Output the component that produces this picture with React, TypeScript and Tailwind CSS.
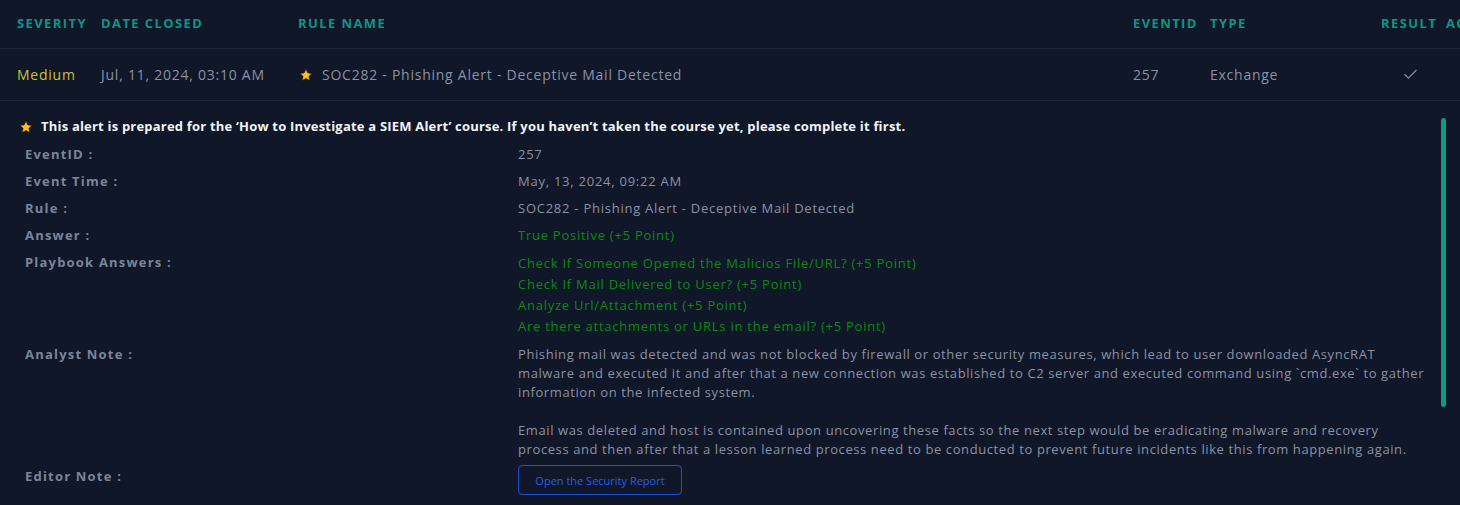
import { Check } from "lucide-react";

const cols = [
  { label: "SEVERITY", w: "w-[84px]" },
  { label: "DATE CLOSED", w: "w-[197px]" },
  { label: "RULE NAME", w: "w-[835px]" },
  { label: "EVENTID", w: "w-[77px]" },
  { label: "TYPE", w: "w-[171px]" },
  { label: "RESULT", w: "w-[65px]" },
  { label: "ACTION", w: "w-[80px]" },
];

const playbook = [
  "Check If Someone Opened the Malicios File/URL? (+5 Point)",
  "Check If Mail Delivered to User? (+5 Point)",
  "Analyze Url/Attachment (+5 Point)",
  "Are there attachments or URLs in the email? (+5 Point)",
];

const noteLines = [
  "Phishing mail was detected and was not blocked by firewall or other security measures, which lead to user downloaded AsyncRAT",
  "malware and executed it and after that a new connection was established to C2 server and executed command using `cmd.exe` to gather",
  "information on the infected system.",
  "",
  "Email was deleted and host is contained upon uncovering these facts so the next step would be eradicating malware and recovery",
  "process and then after that a lesson learned process need to be conducted to prevent future incidents like this from happening again.",
];

const Star = ({ size = 13 }: { size?: number }) => (
  <svg width={size} height={size} viewBox="0 0 24 24" className="shrink-0">
    <path
      d="M12 1.8l3.1 6.6 7.2.9-5.3 5 1.4 7.1L12 17.9l-6.4 3.5 1.4-7.1-5.3-5 7.2-.9z"
      fill="#fbbf24"
      stroke="#1f1400"
      strokeWidth="1"
    />
  </svg>
);

const DetailRow = ({ label, children }: { label: string; children: React.ReactNode }) => (
  <div className="flex py-[4px]">
    <div className="w-[493px] shrink-0 font-bold tracking-[1.2px] text-[#7d8598] leading-[19px]">
      {label}
    </div>
    <div className="flex-1 leading-[19px]">{children}</div>
  </div>
);

export default function App() {
  return (
    <div
      className="w-[1460px] h-[505px] overflow-hidden bg-[#0f1729] text-[#8b92a4] tracking-[0.75px]"
      style={{ fontFamily: '"Open Sans", "Noto Sans", sans-serif' }}
    >
      <div className="w-[1560px]">
        <div className="flex h-[48px] items-center pl-[17px] pb-[1px] text-[13px] font-bold tracking-[1.4px] text-[#0e9585]">
          {cols.map((c) => (
            <div key={c.label} className={`${c.w} shrink-0`}>
              {c.label}
            </div>
          ))}
        </div>
        <div className="flex h-[53px] items-center pl-[17px] border-y border-[#1c2339] text-[14px]">
          <div className="w-[84px] shrink-0 text-[#cdc32f]">Medium</div>
          <div className="w-[197px] shrink-0">Jul, 11, 2024, 03:10 AM</div>
          <div className="w-[835px] shrink-0 flex items-center gap-[9px] pl-[1px]">
            <Star size={14} />
            <span>SOC282 - Phishing Alert - Deceptive Mail Detected</span>
          </div>
          <div className="w-[77px] shrink-0">257</div>
          <div className="w-[171px] shrink-0">Exchange</div>
          <div className="w-[65px] shrink-0 flex justify-center pr-[6px]">
            <Check size={17} strokeWidth={1.6} className="text-[#8b92a4]" />
          </div>
        </div>
      </div>

      <div className="flex pt-[16px]">
        <div className="flex-1 pl-[19px] text-[13px]">
          <div className="flex items-center gap-[8px] leading-[19px] font-bold tracking-[0.2px] text-[#f1f3f6]">
            <Star size={14} />
            <span>
              This alert is prepared for the ‘How to Investigate a SIEM Alert’ course. If you haven’t
              taken the course yet, please complete it first.
            </span>
          </div>
          <div className="pl-[6px] pt-[5px]">
            <DetailRow label="EventID :">257</DetailRow>
            <DetailRow label="Event Time :">May, 13, 2024, 09:22 AM</DetailRow>
            <DetailRow label="Rule :">SOC282 - Phishing Alert - Deceptive Mail Detected</DetailRow>
            <DetailRow label="Answer :">
              <span className="text-[#0b8a12]">True Positive (+5 Point)</span>
            </DetailRow>
            <DetailRow label="Playbook Answers :">
              <div className="text-[#0b8a12] leading-[21px]">
                {playbook.map((p) => (
                  <div key={p}>{p}</div>
                ))}
              </div>
            </DetailRow>
            <DetailRow label="Analyst Note :">
              <div className="tracking-[0.6px]">
                {noteLines.map((l, i) => (
                  <div key={i} className="h-[19px] whitespace-nowrap">
                    {l}
                  </div>
                ))}
              </div>
            </DetailRow>
            <DetailRow label="Editor Note :">
              <button className="-mt-[2px] h-[30px] w-[164px] rounded-[4px] border border-[#1d4fd6] text-[11px] tracking-normal text-[#2a5bea]">
                Open the Security Report
              </button>
            </DetailRow>
          </div>
        </div>
        <div className="w-[20px] shrink-0 pt-[1px]">
          <div className="ml-[1px] h-[289px] w-[5px] rounded-full bg-[#0e9a85]" />
        </div>
      </div>
    </div>
  );
}
